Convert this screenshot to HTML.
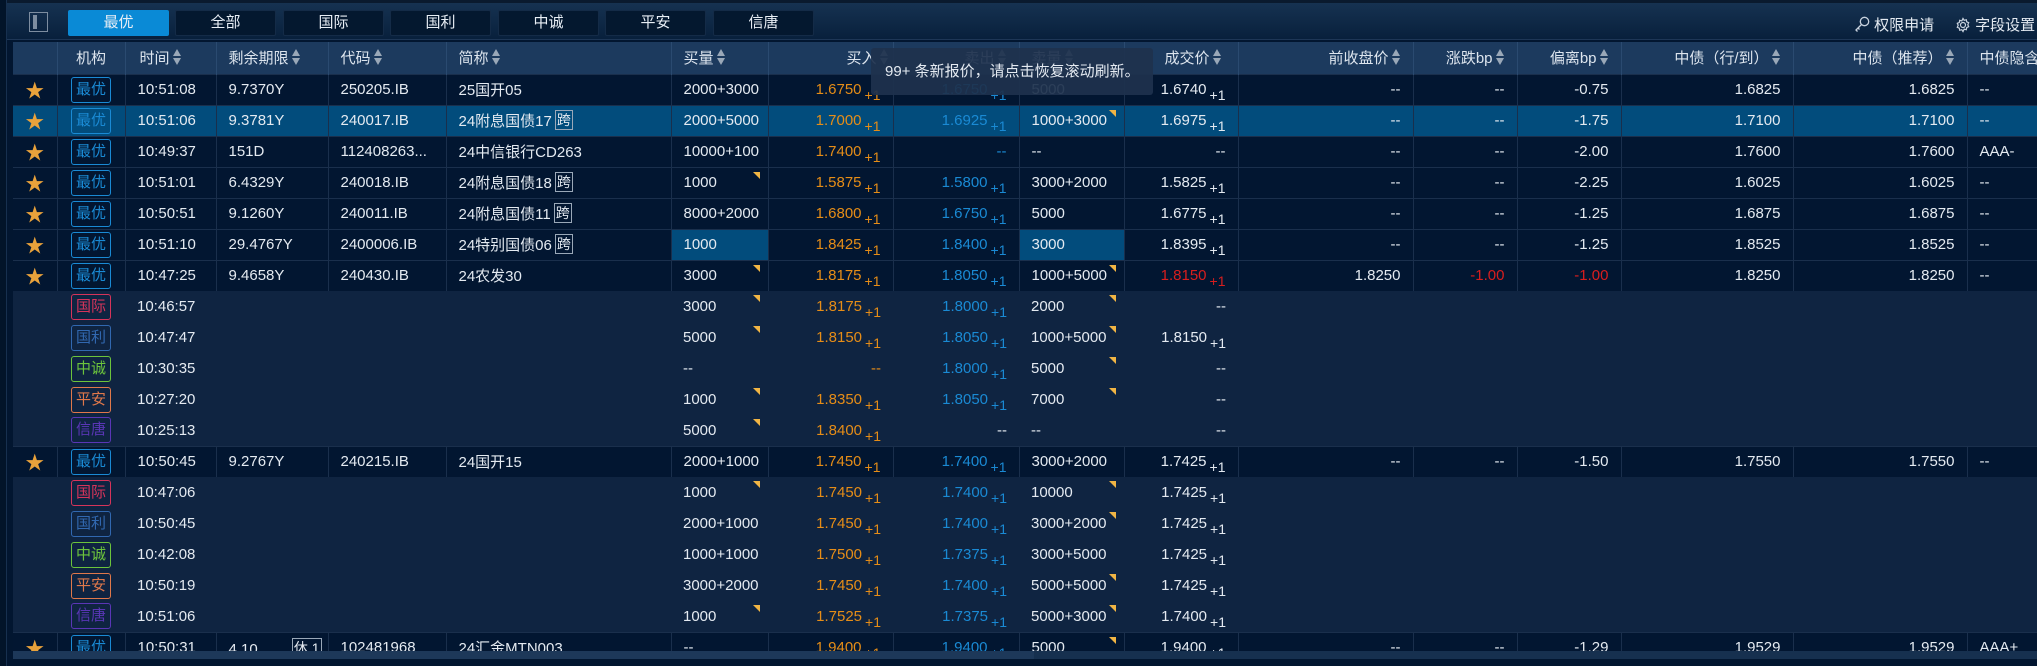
<!DOCTYPE html>
<html><head><meta charset="utf-8"><style>
*{margin:0;padding:0;box-sizing:border-box}
body{width:2037px;height:666px;overflow:hidden;background:#021630;font-family:"Liberation Sans","Noto Sans CJK SC",sans-serif;color:#e4eaf1;font-size:15px;position:relative}
.lstrip{position:absolute;left:0;top:0;width:7px;height:666px;background:#021429;border-right:1px solid #17304f}
.top{position:absolute;left:7px;top:0;width:2030px;height:40px;background:linear-gradient(#163251,#08203c);border-top:3px solid #0a1a2e;border-bottom:1px solid #1d3656}
.tab{position:absolute;top:7px;width:101px;height:26px;background:#04182f;border:1px solid #142b47;border-radius:2px;text-align:center;line-height:24px;font-size:15px;color:#e8eef5}
.tab.on{background:#0a8ad6;border-color:#0a8ad6}
.sb{position:absolute;left:22px;top:9px;width:19px;height:20px;border:1px solid #7d8da0}
.sb:after{content:"";position:absolute;left:3px;top:2px;width:4px;height:14px;background:#7d8da0}
.rt{position:absolute;top:11px;font-size:15px;color:#e4eaf1}
.wrap{position:absolute;left:13px;top:42px;width:2024px;height:609px;overflow:hidden}
table{border-collapse:collapse;table-layout:fixed;width:2040px}
td{height:31px;white-space:nowrap;overflow:hidden;padding:0 12px;position:relative;vertical-align:middle}
tr.h td{height:32px;background:#1c3a5e;border-right:1px solid #2a4a70;color:#dde5ee}
tr.m td{background:#021631;border-right:1px solid #1a2f4c;border-top:1px solid #1a2f4c}
tr.sel td{background:#024c7c}
tr.s td{background:#0f2441}
tr.m td.hl{background:#024c7c}
.r{text-align:right}.c{text-align:center}
.o{color:#e68d17}.b{color:#1a8ad4}.red{color:#d81e1e}
sub{font-size:14px;vertical-align:-6px;margin-left:3px;line-height:0}
.tag{display:inline-block;width:40px;height:26px;border:1px solid;border-radius:3px;line-height:24px;text-align:center;font-size:15px}
.t0{color:#1a8ad4;border-color:#1a8ad4}.t1{color:#d6345a;border-color:#d6345a}.t2{color:#3168b0;border-color:#3168b0}.t3{color:#6cc43c;border-color:#6cc43c}.t4{color:#e0784a;border-color:#e0784a}.t5{color:#5a36b6;border-color:#5a36b6}
.star{color:#e9a23b;font-size:19px}
.k{display:inline-block;border:1px solid #9aa8b8;font-size:14px;line-height:18px;padding:0 1px;margin-left:3px;vertical-align:1px}
.tri:after{content:"";position:absolute;right:8px;top:4px;border-top:7px solid #f1b544;border-left:7px solid transparent}
.ar{display:inline-block;width:9px;height:17px;vertical-align:-3px;margin-left:3px;position:relative}
.ar:before{content:"";position:absolute;left:0;top:0;border-bottom:7px solid #9aa8b8;border-left:4.5px solid transparent;border-right:4.5px solid transparent}
.ar:after{content:"";position:absolute;left:0;top:9px;border-top:7px solid #9aa8b8;border-left:4.5px solid transparent;border-right:4.5px solid transparent}
.tip{position:absolute;left:871px;top:48px;width:282px;height:47px;background:rgba(30,50,78,0.93);border-radius:3px;font-size:15px;color:#e4eaf1;line-height:47px;padding-left:14px}
.scroll{position:absolute;left:13px;top:651px;width:2024px;height:8px;background:#16304f}
.thumb{position:absolute;left:13px;top:651px;width:1021px;height:8px;background:#1d3859}
</style></head><body>
<div class="lstrip"></div>
<div class="top">
<div class="sb"></div>
<div class="tab on" style="left:61px">最优</div>
<div class="tab" style="left:168px">全部</div>
<div class="tab" style="left:276px">国际</div>
<div class="tab" style="left:383px">国利</div>
<div class="tab" style="left:491px">中诚</div>
<div class="tab" style="left:598px">平安</div>
<div class="tab" style="left:706px">信唐</div>
<div class="rt" style="left:1847px"><svg width="16" height="17" viewBox="0 0 16 17" style="vertical-align:-3px"><circle cx="10.5" cy="5.5" r="4.2" fill="none" stroke="#c8d2de" stroke-width="1.3"/><path d="M7.5 8.5L2 14l1.5 1.5M4 12l1.5 1.5" fill="none" stroke="#c8d2de" stroke-width="1.3"/></svg> 权限申请</div>
<div class="rt" style="left:1948px"><svg width="16" height="16" viewBox="0 0 16 16" style="vertical-align:-3px"><circle cx="8" cy="8" r="2.5" fill="none" stroke="#c8d2de" stroke-width="1.2"/><path d="M8 1.5l1.2 1.8 2.1-.6.4 2.1 2 .9-.9 2 .9 2-2 .9-.4 2.1-2.1-.6L8 14.5l-1.2-1.8-2.1.6-.4-2.1-2-.9.9-2-.9-2 2-.9.4-2.1 2.1.6z" fill="none" stroke="#c8d2de" stroke-width="1.2"/></svg> 字段设置</div>
</div>
<div class="wrap"><table>
<colgroup><col style="width:44px"><col style="width:68px"><col style="width:91px"><col style="width:112px"><col style="width:118px"><col style="width:225px"><col style="width:97px"><col style="width:125px"><col style="width:126px"><col style="width:105px"><col style="width:114px"><col style="width:175px"><col style="width:104px"><col style="width:104px"><col style="width:172px"><col style="width:174px"><col style="width:86px"></colgroup>
<tr class="h"><td></td><td class="c">机构</td><td style="padding-left:14px">时间<i class="ar"></i></td><td>剩余期限<i class="ar"></i></td><td>代码<i class="ar"></i></td><td>简称<i class="ar"></i></td><td>买量<i class="ar"></i></td><td class="r" style="padding-right:4px">买入<i class="ar"></i></td><td class="r">卖出<i class="ar"></i></td><td>卖量<i class="ar"></i></td><td class="r" style="padding-right:16px">成交价<i class="ar"></i></td><td class="r">前收盘价<i class="ar"></i></td><td class="r">涨跌bp<i class="ar"></i></td><td class="r">偏离bp<i class="ar"></i></td><td class="r">中债（行/到）<i class="ar"></i></td><td class="r">中债（推荐）<i class="ar"></i></td><td>中债隐含</td></tr>

<tr class="m"><td class="c star">★</td><td class="c"><span class="tag t0">最优</span></td><td>10:51:08</td><td>9.7370Y</td><td>250205.IB</td><td>25国开05</td><td>2000+3000</td><td class="r o">1.6750<sub>+1</sub></td><td class="r b">1.6750<sub>+1</sub></td><td>5000</td><td class="r">1.6740<sub>+1</sub></td><td class="r">--</td><td class="r">--</td><td class="r">-0.75</td><td class="r">1.6825</td><td class="r">1.6825</td><td>--</td></tr>
<tr class="m sel"><td class="c star">★</td><td class="c"><span class="tag t0">最优</span></td><td>10:51:06</td><td>9.3781Y</td><td>240017.IB</td><td>24附息国债17<span class="k">跨</span></td><td>2000+5000</td><td class="r o">1.7000<sub>+1</sub></td><td class="r b">1.6925<sub>+1</sub></td><td class="tri">1000+3000</td><td class="r">1.6975<sub>+1</sub></td><td class="r">--</td><td class="r">--</td><td class="r">-1.75</td><td class="r">1.7100</td><td class="r">1.7100</td><td>--</td></tr>
<tr class="m"><td class="c star">★</td><td class="c"><span class="tag t0">最优</span></td><td>10:49:37</td><td>151D</td><td>112408263...</td><td>24中信银行CD263</td><td>10000+100</td><td class="r o">1.7400<sub>+1</sub></td><td class="r b">--</td><td>--</td><td class="r">--</td><td class="r">--</td><td class="r">--</td><td class="r">-2.00</td><td class="r">1.7600</td><td class="r">1.7600</td><td>AAA-</td></tr>
<tr class="m"><td class="c star">★</td><td class="c"><span class="tag t0">最优</span></td><td>10:51:01</td><td>6.4329Y</td><td>240018.IB</td><td>24附息国债18<span class="k">跨</span></td><td class="tri">1000</td><td class="r o">1.5875<sub>+1</sub></td><td class="r b">1.5800<sub>+1</sub></td><td>3000+2000</td><td class="r">1.5825<sub>+1</sub></td><td class="r">--</td><td class="r">--</td><td class="r">-2.25</td><td class="r">1.6025</td><td class="r">1.6025</td><td>--</td></tr>
<tr class="m"><td class="c star">★</td><td class="c"><span class="tag t0">最优</span></td><td>10:50:51</td><td>9.1260Y</td><td>240011.IB</td><td>24附息国债11<span class="k">跨</span></td><td>8000+2000</td><td class="r o">1.6800<sub>+1</sub></td><td class="r b">1.6750<sub>+1</sub></td><td>5000</td><td class="r">1.6775<sub>+1</sub></td><td class="r">--</td><td class="r">--</td><td class="r">-1.25</td><td class="r">1.6875</td><td class="r">1.6875</td><td>--</td></tr>
<tr class="m"><td class="c star">★</td><td class="c"><span class="tag t0">最优</span></td><td>10:51:10</td><td>29.4767Y</td><td>2400006.IB</td><td>24特别国债06<span class="k">跨</span></td><td class="hl">1000</td><td class="r o">1.8425<sub>+1</sub></td><td class="r b">1.8400<sub>+1</sub></td><td class="hl">3000</td><td class="r">1.8395<sub>+1</sub></td><td class="r">--</td><td class="r">--</td><td class="r">-1.25</td><td class="r">1.8525</td><td class="r">1.8525</td><td>--</td></tr>
<tr class="m"><td class="c star">★</td><td class="c"><span class="tag t0">最优</span></td><td>10:47:25</td><td>9.4658Y</td><td>240430.IB</td><td>24农发30</td><td class="tri">3000</td><td class="r o">1.8175<sub>+1</sub></td><td class="r b">1.8050<sub>+1</sub></td><td class="tri">1000+5000</td><td class="r red">1.8150<sub>+1</sub></td><td class="r">1.8250</td><td class="r red">-1.00</td><td class="r red">-1.00</td><td class="r">1.8250</td><td class="r">1.8250</td><td>--</td></tr>
<tr class="s"><td></td><td class="c"><span class="tag t1">国际</span></td><td>10:46:57</td><td></td><td></td><td></td><td class="tri">3000</td><td class="r o">1.8175<sub>+1</sub></td><td class="r b">1.8000<sub>+1</sub></td><td class="tri">2000</td><td class="r">--</td><td></td><td></td><td></td><td></td><td></td><td></td></tr>
<tr class="s"><td></td><td class="c"><span class="tag t2">国利</span></td><td>10:47:47</td><td></td><td></td><td></td><td class="tri">5000</td><td class="r o">1.8150<sub>+1</sub></td><td class="r b">1.8050<sub>+1</sub></td><td class="tri">1000+5000</td><td class="r">1.8150<sub>+1</sub></td><td></td><td></td><td></td><td></td><td></td><td></td></tr>
<tr class="s"><td></td><td class="c"><span class="tag t3">中诚</span></td><td>10:30:35</td><td></td><td></td><td></td><td>--</td><td class="r o">--</td><td class="r b">1.8000<sub>+1</sub></td><td class="tri">5000</td><td class="r">--</td><td></td><td></td><td></td><td></td><td></td><td></td></tr>
<tr class="s"><td></td><td class="c"><span class="tag t4">平安</span></td><td>10:27:20</td><td></td><td></td><td></td><td class="tri">1000</td><td class="r o">1.8350<sub>+1</sub></td><td class="r b">1.8050<sub>+1</sub></td><td class="tri">7000</td><td class="r">--</td><td></td><td></td><td></td><td></td><td></td><td></td></tr>
<tr class="s"><td></td><td class="c"><span class="tag t5">信唐</span></td><td>10:25:13</td><td></td><td></td><td></td><td class="tri">5000</td><td class="r o">1.8400<sub>+1</sub></td><td class="r">--</td><td>--</td><td class="r">--</td><td></td><td></td><td></td><td></td><td></td><td></td></tr>
<tr class="m"><td class="c star">★</td><td class="c"><span class="tag t0">最优</span></td><td>10:50:45</td><td>9.2767Y</td><td>240215.IB</td><td>24国开15</td><td>2000+1000</td><td class="r o">1.7450<sub>+1</sub></td><td class="r b">1.7400<sub>+1</sub></td><td>3000+2000</td><td class="r">1.7425<sub>+1</sub></td><td class="r">--</td><td class="r">--</td><td class="r">-1.50</td><td class="r">1.7550</td><td class="r">1.7550</td><td>--</td></tr>
<tr class="s"><td></td><td class="c"><span class="tag t1">国际</span></td><td>10:47:06</td><td></td><td></td><td></td><td class="tri">1000</td><td class="r o">1.7450<sub>+1</sub></td><td class="r b">1.7400<sub>+1</sub></td><td class="tri">10000</td><td class="r">1.7425<sub>+1</sub></td><td></td><td></td><td></td><td></td><td></td><td></td></tr>
<tr class="s"><td></td><td class="c"><span class="tag t2">国利</span></td><td>10:50:45</td><td></td><td></td><td></td><td>2000+1000</td><td class="r o">1.7450<sub>+1</sub></td><td class="r b">1.7400<sub>+1</sub></td><td class="tri">3000+2000</td><td class="r">1.7425<sub>+1</sub></td><td></td><td></td><td></td><td></td><td></td><td></td></tr>
<tr class="s"><td></td><td class="c"><span class="tag t3">中诚</span></td><td>10:42:08</td><td></td><td></td><td></td><td>1000+1000</td><td class="r o">1.7500<sub>+1</sub></td><td class="r b">1.7375<sub>+1</sub></td><td>3000+5000</td><td class="r">1.7425<sub>+1</sub></td><td></td><td></td><td></td><td></td><td></td><td></td></tr>
<tr class="s"><td></td><td class="c"><span class="tag t4">平安</span></td><td>10:50:19</td><td></td><td></td><td></td><td>3000+2000</td><td class="r o">1.7450<sub>+1</sub></td><td class="r b">1.7400<sub>+1</sub></td><td class="tri">5000+5000</td><td class="r">1.7425<sub>+1</sub></td><td></td><td></td><td></td><td></td><td></td><td></td></tr>
<tr class="s"><td></td><td class="c"><span class="tag t5">信唐</span></td><td>10:51:06</td><td></td><td></td><td></td><td class="tri">1000</td><td class="r o">1.7525<sub>+1</sub></td><td class="r b">1.7375<sub>+1</sub></td><td class="tri">5000+3000</td><td class="r">1.7400<sub>+1</sub></td><td></td><td></td><td></td><td></td><td></td><td></td></tr>
<tr class="m"><td class="c star">★</td><td class="c"><span class="tag t0">最优</span></td><td>10:50:31</td><td>4.10 <span class="k" style="margin-left:30px">休 1</span></td><td>102481968</td><td>24汇金MTN003</td><td>--</td><td class="r o">1.9400<sub>+1</sub></td><td class="r b">1.9400<sub>+1</sub></td><td class="tri">5000</td><td class="r">1.9400<sub>+1</sub></td><td class="r">--</td><td class="r">--</td><td class="r">-1.29</td><td class="r">1.9529</td><td class="r">1.9529</td><td>AAA+</td></tr>
</table></div>
<div class="tip">99+ 条新报价，请点击恢复滚动刷新。</div>
<div class="scroll"></div><div class="thumb"></div>
</body></html>
